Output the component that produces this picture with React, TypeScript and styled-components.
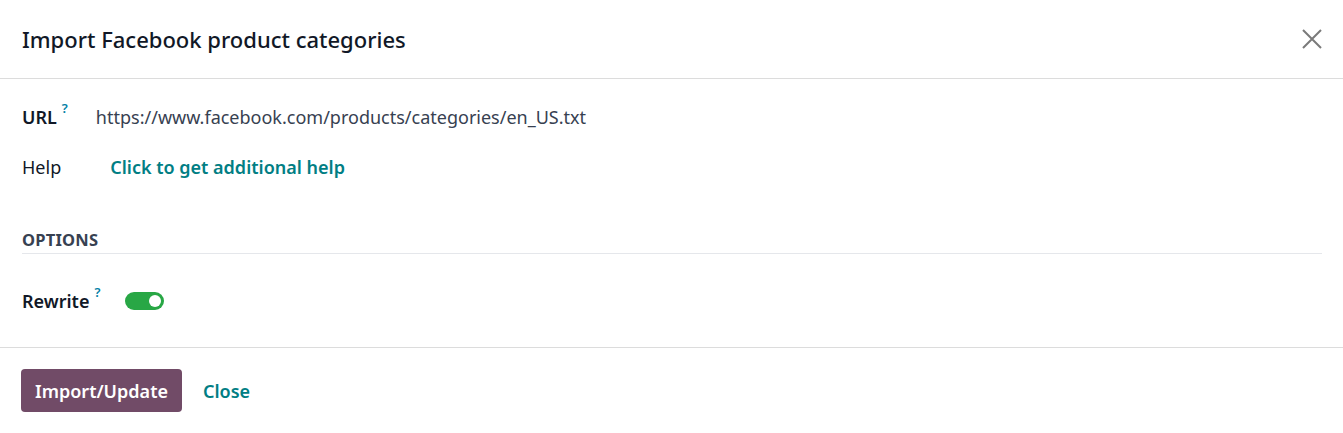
import React from "react";
import styled, { createGlobalStyle } from "styled-components";

const Global = createGlobalStyle`
  html, body { margin: 0; padding: 0; background: #fff; }
  body { font-family: "Noto Sans", "Open Sans", sans-serif; color: #374151; }
`;

const Modal = styled.div`
  width: 1343px;
  height: 433px;
  display: flex;
  flex-direction: column;
  background: #fff;
`;

const Header = styled.div`
  height: 79px;
  box-sizing: border-box;
  border-bottom: 1px solid #dcdcdc;
  display: flex;
  align-items: center;
  justify-content: space-between;
  padding: 0 18px 0 22px;
`;

const Title = styled.h1`
  margin: 0;
  font-size: 22px;
  font-weight: 500;
  color: #111827;
`;

const CloseBtn = styled.button`
  border: 0;
  background: none;
  padding: 0;
  width: 26px;
  height: 26px;
  display: flex;
  align-items: center;
  justify-content: center;
  cursor: pointer;
`;

const Body = styled.div`
  padding: 22px 21px 0 22px;
  flex: 1;
  display: flex;
  flex-direction: column;
  border-bottom: 1px solid #dcdcdc;
`;

const Row = styled.div<{ $gap: number; $h: number; $mt?: number }>`
  display: flex;
  align-items: center;
  gap: ${(p) => p.$gap}px;
  height: ${(p) => p.$h}px;
  margin-top: ${(p) => p.$mt ?? 0}px;
`;

const Label = styled.span<{ $bold?: boolean }>`
  font-size: 18px;
  font-weight: ${(p) => (p.$bold ? 600 : 400)};
  color: #111827;
  display: inline-flex;
  align-items: flex-start;
`;

const Q = styled.sup`
  font-size: 13px;
  font-weight: 600;
  color: #0180a5;
  margin-left: 5px;
  line-height: 1;
  position: relative;
  top: -3px;
`;

const Value = styled.span`
  font-size: 18px;
  color: #374151;
`;

const Link = styled.a`
  font-size: 18px;
  font-weight: 600;
  color: #017e84;
  text-decoration: none;
`;

const Section = styled.div`
  margin-top: 28px;
  line-height: 22px;
  border-bottom: 1px solid #e5e7eb;
  padding-bottom: 2px;
  font-size: 16.5px;
  font-weight: 700;
  color: #374151;
  letter-spacing: 0.2px;
`;

const Toggle = styled.span`
  width: 39px;
  height: 18px;
  border-radius: 9px;
  background: #28a745;
  display: inline-flex;
  align-items: center;
  justify-content: flex-end;
  padding-right: 3px;
  box-sizing: border-box;
  &::after {
    content: "";
    width: 12px;
    height: 12px;
    border-radius: 50%;
    background: #fff;
  }
`;

const Footer = styled.div`
  height: 85px;
  box-sizing: border-box;
  display: flex;
  align-items: center;
  gap: 21px;
  padding: 0 21px 0 21px;
`;

const Primary = styled.button`
  background: #714b67;
  color: #fff;
  border: 0;
  border-radius: 4px;
  height: 43px;
  padding: 0 14px;
  font-family: inherit;
  font-size: 18px;
  font-weight: 600;
`;

const Secondary = styled.button`
  background: none;
  border: 0;
  padding: 0;
  color: #017e84;
  font-family: inherit;
  font-size: 18px;
  font-weight: 600;
`;

export default function App() {
  return (
    <>
      <Global />
      <Modal>
        <Header>
          <Title>Import Facebook product categories</Title>
          <CloseBtn aria-label="Close">
            <svg width="22" height="22" viewBox="0 0 22 22">
              <path d="M2 2 L20 20 M20 2 L2 20" stroke="#7a7a7a" strokeWidth="2" />
            </svg>
          </CloseBtn>
        </Header>
        <Body>
          <Row $gap={28} $h={32}>
            <Label $bold>URL<Q>?</Q></Label>
            <Value>https://www.facebook.com/products/categories/en_US.txt</Value>
          </Row>
          <Row $gap={49} $h={68}>
            <Label>Help</Label>
            <Link href="#">Click to get additional help</Link>
          </Row>
          <Section>OPTIONS</Section>
          <Row $gap={25} $h={64} $mt={15}>
            <Label $bold>Rewrite<Q>?</Q></Label>
            <Toggle />
          </Row>
        </Body>
        <Footer>
          <Primary>Import/Update</Primary>
          <Secondary>Close</Secondary>
        </Footer>
      </Modal>
    </>
  );
}
